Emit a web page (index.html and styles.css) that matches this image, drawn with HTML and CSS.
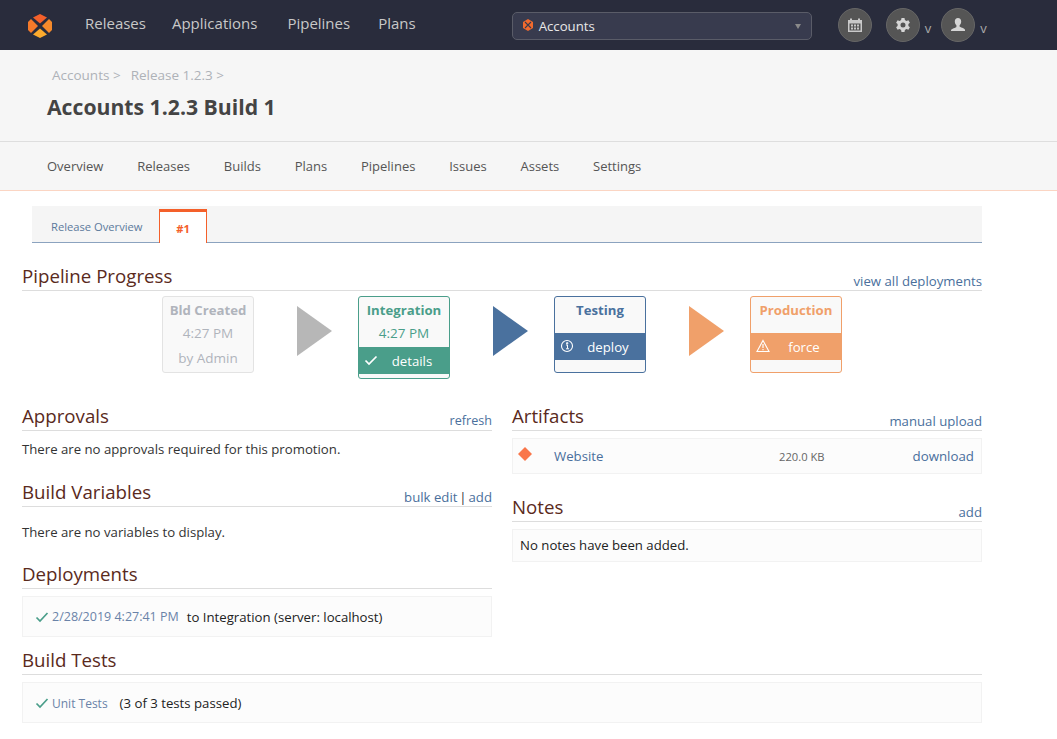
FILE: index.html
```html
<!DOCTYPE html>
<html lang="en">
<head>
<meta charset="utf-8">
<title>Accounts 1.2.3 Build 1</title>
<link rel="stylesheet" href="styles.css">
</head>
<body>
<header class="topbar">
  <svg class="logo" width="26" height="26" viewBox="0 0 26 26">
    <path d="M13 1 L20 4.500 L13 10.500 L6 4.500Z" fill="#f4602a"/>
    <path d="M22 6 L25 9 L25 17 L22 20 L15 13Z" fill="#f58a2b"/>
    <path d="M4 6 L1 9 L1 17 L4 20 L11 13Z" fill="#f57a2a"/>
    <path d="M13 15.500 L20 21.500 L13 25 L6 21.500Z" fill="#fbaa2d"/>
  </svg>
  <nav class="mainnav">
    <a>Releases</a><a class="nav-apps">Applications</a><a>Pipelines</a><a>Plans</a>
  </nav>
  <div class="selector">
    <svg width="12" height="12" viewBox="0 0 12 12"><path d="M6 0 L11 3 L11 9 L6 12 L1 9 L1 3Z" fill="#f26a2e"/><path d="M3 3 L9 9 M9 3 L3 9" stroke="#383b4e" stroke-width="1.100"/></svg>
    <span class="selector-text">Accounts</span>
    <span class="caret"></span>
  </div>
  <div class="tools">
    <span class="round">
      <svg width="16" height="16" viewBox="0 0 16 16" fill="#c9c9c9"><path d="M1 3h2V1.500h2V3h6V1.500h2V3h2v12H1zM2.500 6.500v7h11v-7zM4 7.500h2v2H4zM7 7.500h2v2H7zM10 7.500h2v2h-2zM4 10.500h2v2H4zM7 10.500h2v2H7zM10 10.500h2v2h-2z" fill-rule="evenodd"/></svg>
    </span>
    <span class="round round-gear">
      <svg width="16" height="16" viewBox="0 0 16 16" fill="#d5d5d5"><path fill-rule="evenodd" d="M6.500 1h3l.4 2 1.500.9 2-.7 1.500 2.600-1.500 1.300v1.800l1.500 1.300-1.500 2.600-2-.7-1.500.9-.4 2h-3l-.4-2-1.500-.9-2 .7L1.100 10.200l1.500-1.300V7.100L1.100 5.800l1.500-2.600 2 .7 1.500-.9zM8 5.500a2.500 2.500 0 1 0 0 5 2.500 2.500 0 0 0 0-5z"/></svg>
    </span>
    <span class="chev">v</span>
    <span class="round round-user">
      <svg width="16" height="16" viewBox="0 0 16 16" fill="#d5d5d5"><path d="M8 1c2 0 3.200 1.500 3.200 3.500 0 1.500-.7 3-1.600 3.800v1.200c0 .8 5.400 1.500 5.400 3.500V14H1v-.5c0-2 5.400-2.700 5.400-3.500V8.300C5.500 7.500 4.800 6 4.800 4.500 4.800 2.500 6 1 8 1z"/></svg>
    </span>
    <span class="chev">v</span>
  </div>
</header>

<section class="titlebar">
  <div class="crumbs"><a>Accounts &gt;</a><a>Release 1.2.3 &gt;</a></div>
  <h1>Accounts 1.2.3 Build 1</h1>
</section>

<nav class="subnav">
  <a>Overview</a><a>Releases</a><a>Builds</a><a>Plans</a><a>Pipelines</a><a>Issues</a><a>Assets</a><a>Settings</a>
</nav>

<main class="content">
  <div class="tabs">
    <a class="tab">Release Overview</a>
    <a class="tab tab-active">#1</a>
  </div>

  <div class="heading heading-first"><h2>Pipeline Progress</h2><a>view all deployments</a></div>
  <div class="pipeline">
    <div class="stage stage-grey">
      <b>Bld Created</b><span>4:27 PM</span><span class="by">by Admin</span>
    </div>
    <span class="arrow arrow-grey"></span>
    <div class="stage stage-green">
      <b>Integration</b><span>4:27 PM</span>
      <div class="action">
        <svg width="14" height="14" viewBox="0 0 14 14"><path d="M1.500 7.500 L5 11 L12.500 3.500" fill="none" stroke="#fff" stroke-width="1.700"/></svg>
        details
      </div>
    </div>
    <span class="arrow arrow-blue"></span>
    <div class="stage stage-blue">
      <b>Testing</b>
      <div class="action">
        <svg width="14" height="14" viewBox="0 0 14 14"><circle cx="7" cy="7" r="5.500" fill="none" stroke="#fff" stroke-width="1.100"/><path d="M6 6h1.500v3.500M6 9.800h3M6.600 3.700h1.200v1.200H6.600z" fill="none" stroke="#fff"/></svg>
        deploy
      </div>
    </div>
    <span class="arrow arrow-orange"></span>
    <div class="stage stage-orange">
      <b>Production</b>
      <div class="action">
        <svg width="14" height="14" viewBox="0 0 14 14"><path d="M7 1.500 L13 12.500 H1Z" fill="none" stroke="#fff" stroke-width="1.100"/><path d="M7 5v4M7 10v1.300" stroke="#fff" stroke-width="1.200"/></svg>
        force
      </div>
    </div>
  </div>

  <div class="columns">
    <div class="col">
      <div class="heading"><h2>Approvals</h2><a class="link-sm">refresh</a></div>
      <p class="plain">There are no approvals required for this promotion.</p>
      <div class="heading heading-vars"><h2>Build Variables</h2><span class="links"><a>bulk edit</a> | <a>add</a></span></div>
      <p class="plain plain-vars">There are no variables to display.</p>
      <div class="heading heading-dep"><h2>Deployments</h2></div>
      <div class="well well-list">
        <svg class="tick" width="14" height="14" viewBox="0 0 14 14"><path d="M1.500 7.500 L5 11 L12.500 3" fill="none" stroke="#4a9e8a" stroke-width="1.700"/></svg>
        <a>2/28/2019 4:27:41 PM</a><span class="txt">to Integration (server: localhost)</span>
      </div>
    </div>
    <div class="col">
      <div class="heading"><h2>Artifacts</h2><a>manual upload</a></div>
      <div class="well artifact">
        <svg width="14" height="14" viewBox="0 0 14 14"><path d="M7 0 L14 7 L7 14 L0 7Z" fill="#f9764a"/></svg>
        <a class="art-name">Website</a>
        <span class="art-size">220.0 KB</span>
        <a class="art-dl">download</a>
      </div>
      <div class="heading heading-notes"><h2>Notes</h2><a>add</a></div>
      <div class="well well-notes">No notes have been added.</div>
    </div>
  </div>

  <div class="heading heading-tests"><h2>Build Tests</h2></div>
  <div class="well well-list well-tests">
    <svg class="tick" width="14" height="14" viewBox="0 0 14 14"><path d="M1.500 7.500 L5 11 L12.500 3" fill="none" stroke="#4a9e8a" stroke-width="1.700"/></svg>
    <a>Unit Tests</a><span class="txt txt-wide">(3 of 3 tests passed)</span>
  </div>
</main>
</body>
</html>
```

FILE: styles.css
```css
* { box-sizing: border-box; }
html, body { margin: 0; padding: 0; }
body {
  font-family: "Open Sans", "Noto Sans", sans-serif;
  font-size: 13px;
  color: #222;
  background: #fff;
  height: 739px;
  overflow: hidden;
}
a { color: #4a6f9c; }

.topbar {
  height: 50px;
  background: #292c3c;
  display: flex;
  align-items: center;
  padding-left: 27px;
}
.logo { flex: none; margin-top: 1px; }
.mainnav { display: flex; gap: 28px; margin-left: 32px; margin-top: -4px; }
.mainnav a { color: #c8c8c8; font-size: 15px; }
.mainnav .nav-apps { margin: 0 2px 0 -2px; }
.selector {
  width: 300px;
  height: 28px;
  margin-left: 96px;
  margin-top: 2px;
  background: #383b4e;
  border: 1px solid #5a5c68;
  border-radius: 5px;
  display: flex;
  align-items: center;
  padding: 0 10px 0 9px;
  gap: 5px;
}
.selector svg { margin-top: -3px; }
.selector-text { color: #e8e8e8; font-size: 13.200px; flex: 1; }
.caret { border: 3.500px solid transparent; border-top: 5px solid #8a8a8a; border-bottom: 0; }
.tools { display: flex; align-items: center; margin-left: 26px; margin-top: 0; }
.round {
  width: 34px;
  height: 34px;
  border-radius: 50%;
  background: #555;
  border: 1px solid #666;
  display: flex;
  align-items: center;
  justify-content: center;
}
.round-gear { margin-left: 14px; }
.round-user { margin-left: 10px; }
.chev { color: #aaa; font-size: 13px; margin-left: 5px; margin-top: 6px; }

.titlebar {
  height: 92px;
  background: #f6f6f6;
  border-bottom: 1px solid #dedede;
  padding: 16px 47px 0;
}
.crumbs { display: flex; gap: 10px; padding-left: 5px; line-height: 18px; }
.crumbs a { color: #aeb2b8; font-size: 13.500px; }
h1 { margin: 9px 0 0; font-size: 21.200px; line-height: 28px; color: #444; font-weight: 700; }

.subnav {
  height: 49px;
  background: #f6f6f6;
  border-bottom: 1px solid #fbd5c3;
  display: flex;
  align-items: center;
  gap: 33.800px;
  padding-left: 47px;
}
.subnav a { color: #555; font-size: 13px; }

.content { padding: 15px 75px 0 22px; }

.tabs {
  margin-left: 10px;
  height: 37px;
  background: #f5f5f5;
  border-bottom: 1px solid #8ba3bf;
  display: flex;
  align-items: flex-end;
}
.tab { color: #5c7a9c; font-size: 11.200px; height: 36px; padding: 13px 0 0 19px; width: 127px; white-space: nowrap; }
.tab-active {
  width: 48px;
  height: 34px;
  margin-bottom: -1px;
  padding: 9px 0 0;
  text-align: center;
  background: #fff;
  color: #f4602a;
  font-weight: 700;
  border: 1px solid #f4602a;
  border-top: 3px solid #f4602a;
  border-bottom: 0;
}

.heading {
  display: flex;
  justify-content: space-between;
  align-items: flex-end;
  border-bottom: 1px solid #ddd;
  height: 28px;
}
.heading h2 {
  margin: 0 0 1px;
  font-size: 18.700px;
  font-weight: 400;
  line-height: 26px;
  color: #5a2a1c;
}
.heading a { font-size: 13.200px; line-height: 18px; }
.heading .link-sm { font-size: 12.600px; }
.links { font-size: 13.200px; line-height: 18px; color: #333; word-spacing: -1.500px; }
.links a { word-spacing: 0; }
.heading-first { margin-top: 20px; }
.heading-vars { margin-top: 21px; }
.heading-dep { margin-top: 20px; }
.heading-notes { margin-top: 20px; }
.heading-tests { margin-top: 10px; }

.pipeline {
  display: flex;
  align-items: flex-start;
  margin-top: 5px;
  margin-left: 140px;
  height: 83px;
}
.stage {
  width: 92px;
  height: 77px;
  background: #f9f9f9;
  border: 1px solid;
  border-radius: 3px;
  display: flex;
  flex-direction: column;
  align-items: center;
  font-size: 13.500px;
  overflow: hidden;
}
.stage b { font-size: 13.200px; line-height: 24px; padding-top: 1px; }
.stage span { line-height: 22px; }
.stage .by { line-height: 28px; }
.stage-grey { border-color: #e3e3e3; color: #b0b4bc; }
.stage-green { border-color: #4a9e8a; color: #4a9e8a; height: 83px; }
.stage-blue { border-color: #4a719e; color: #4a719e; }
.stage-orange { border-color: #f0a06a; color: #f0a06a; }
.action {
  align-self: stretch;
  height: 27px;
  margin-top: 11px;
  color: #fff;
  font-size: 13.200px;
  display: flex;
  align-items: center;
  justify-content: center;
  position: relative;
  padding-left: 16px;
}
.stage-green .action { background: #4a9e8a; margin-top: 3px; }
.stage-blue .action { background: #4a719e; }
.stage-orange .action { background: #f0a06a; }
.action svg { position: absolute; left: 5px; top: 6px; }
.arrow {
  width: 0;
  height: 0;
  margin: 10px 26px 0 43px;
  border-style: solid;
  border-width: 25px 0 25px 35px;
  border-color: transparent;
}
.arrow-grey { border-left-color: #b7b7b7; }
.arrow-blue { border-left-color: #4a719e; }
.arrow-orange { border-left-color: #f0a06a; }

.columns {
  display: grid;
  grid-template-columns: 470px 470px;
  gap: 20px;
  margin-top: 24px;
}
.col { min-width: 0; }
.plain { margin: 9px 0 0; line-height: 18px; font-size: 13.200px; color: #333; }
.plain-vars { margin-top: 16px; }

.well {
  background: #fcfcfc;
  border: 1px solid #f2f2f2;
  font-size: 13.200px;
  color: #222;
}
.well-list {
  height: 41px;
  margin-top: 7px;
  display: flex;
  align-items: center;
  padding-left: 12px;
}
.well-list a { margin-left: 3px; font-size: 12.500px; color: #6a83a8; }
.well-tests a { font-size: 12px; padding-top: 1px; }
.txt { margin-left: 8px; }
.txt-wide { margin-left: 12px; }
.artifact {
  height: 36px;
  margin-top: 7px;
  display: flex;
  align-items: center;
  padding: 0 7px 0 5px;
}
.artifact svg { margin-top: -4px; flex: none; }
.art-name { margin-left: 22px; font-size: 13.200px; color: #4a6f9c; }
.art-size { margin-left: auto; font-size: 11.200px; color: #666; margin-right: 88px; }
.art-dl { font-size: 13.300px; color: #4a6f9c; }
.well-notes { height: 33px; margin-top: 7px; padding: 7px 0 0 7px; line-height: 17px; }
```
